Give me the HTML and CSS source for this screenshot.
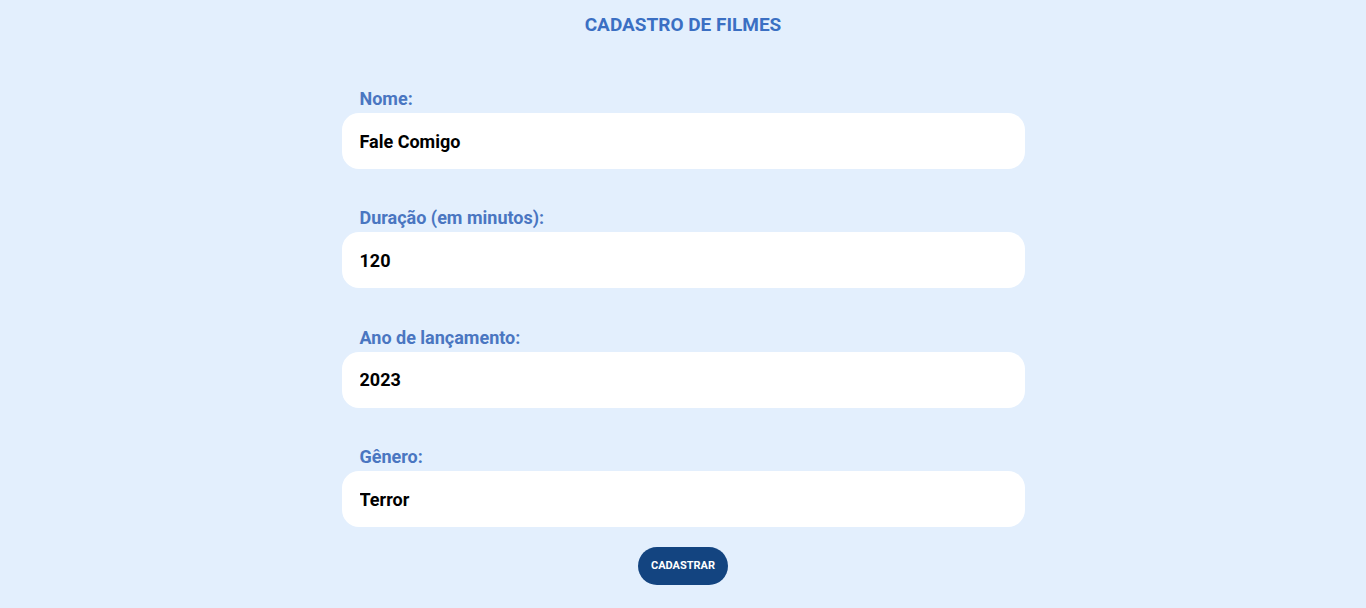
FILE: index.html
```html
<!DOCTYPE html>
<html lang="pt-BR">
<head>
<meta charset="utf-8">
<title>Cadastro de Filmes</title>
<link rel="stylesheet" href="styles.css">
</head>
<body>
<main class="page">
  <h1 class="title">CADASTRO DE FILMES</h1>
  <form class="form">
    <div class="field">
      <label class="label" for="nome">Nome:</label>
      <input class="input" id="nome" type="text" value="Fale Comigo">
    </div>
    <div class="field">
      <label class="label" for="duracao">Duração (em minutos):</label>
      <input class="input" id="duracao" type="text" value="120">
    </div>
    <div class="field">
      <label class="label" for="ano">Ano de lançamento:</label>
      <input class="input" id="ano" type="text" value="2023">
    </div>
    <div class="field">
      <label class="label" for="genero">Gênero:</label>
      <input class="input" id="genero" type="text" value="Terror">
    </div>
    <button class="button" type="button">CADASTRAR</button>
  </form>
</main>
</body>
</html>
```

FILE: styles.css
```css
html, body {
  margin: 0;
  padding: 0;
}
body {
  background: #e3effd;
  font-family: Roboto, "Liberation Sans", sans-serif;
  min-height: 608px;
}
.page {
  display: flex;
  flex-direction: column;
  align-items: center;
}
.title {
  margin: 13px 0 0;
  font-size: 19px;
  line-height: 24px;
  font-weight: 700;
  color: #3b6fc3;
}
.form {
  width: 683px;
  display: flex;
  flex-direction: column;
  margin-top: 51px;
}
.field {
  display: flex;
  flex-direction: column;
  margin-bottom: 38.4px;
}
.field:nth-child(4) {
  margin-bottom: 19.5px;
}
.label {
  padding-left: 18px;
  font-size: 18px;
  line-height: 21px;
  font-weight: 700;
  color: #4a76c1;
  margin-bottom: 4px;
}
.input {
  box-sizing: border-box;
  height: 56px;
  border: none;
  outline: none;
  border-radius: 17px;
  background: #ffffff;
  padding: 0 18px;
  font-family: Roboto, "Liberation Sans", sans-serif;
  font-size: 18px;
  font-weight: 700;
  color: #000000;
}
.button {
  align-self: center;
  width: 90px;
  height: 38px;
  border: none;
  border-radius: 19px;
  background: #134480;
  color: #ffffff;
  font-family: Roboto, "Liberation Sans", sans-serif;
  font-size: 11px;
  font-weight: 700;
  padding: 0;
}
```
